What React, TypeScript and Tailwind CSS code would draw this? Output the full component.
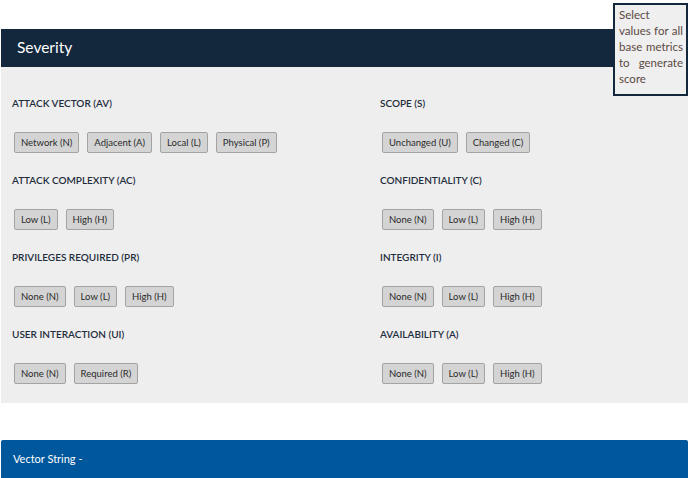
const metrics = [
  [
    { label: 'ATTACK VECTOR (AV)', options: ['Network (N)', 'Adjacent (A)', 'Local (L)', 'Physical (P)'] },
    { label: 'ATTACK COMPLEXITY (AC)', options: ['Low (L)', 'High (H)'] },
    { label: 'PRIVILEGES REQUIRED (PR)', options: ['None (N)', 'Low (L)', 'High (H)'] },
    { label: 'USER INTERACTION (UI)', options: ['None (N)', 'Required (R)'] },
  ],
  [
    { label: 'SCOPE (S)', options: ['Unchanged (U)', 'Changed (C)'] },
    { label: 'CONFIDENTIALITY (C)', options: ['None (N)', 'Low (L)', 'High (H)'] },
    { label: 'INTEGRITY (I)', options: ['None (N)', 'Low (L)', 'High (H)'] },
    { label: 'AVAILABILITY (A)', options: ['None (N)', 'Low (L)', 'High (H)'] },
  ],
]

function Metric({ label, options }: { label: string; options: string[] }) {
  return (
    <div className="mb-[21px] last:mb-0">
      <div className="text-[10px] leading-[12px] font-semibold text-[#1f2d3d]">{label}</div>
      <div className="mt-[23px] flex gap-[8px] pl-[2px]">
        {options.map((o) => (
          <button
            key={o}
            className="h-[21px] px-[6px] bg-[#d4d4d4] border border-[#a3a3a3] rounded-[2px] text-[9.5px] text-[#2a2a2a] leading-none"
          >
            {o}
          </button>
        ))}
      </div>
    </div>
  )
}

export default function App() {
  return (
    <div className="relative w-[689px] h-[478px] bg-white overflow-hidden" style={{ fontFamily: 'Lato, "Open Sans", sans-serif' }}>
      <div className="pt-[29px] pl-[1px] pr-[1px]">
        <div className="h-[38px] bg-[#13273d] flex items-center pl-[16px] text-white text-[15.5px]">Severity</div>
        <div className="bg-[#eeeeee] pt-[30px] pb-[19px] pl-[11px] grid grid-cols-[368px_1fr]">
          {metrics.map((col, i) => (
            <div key={i}>
              {col.map((m) => (
                <Metric key={m.label} {...m} />
              ))}
            </div>
          ))}
        </div>
        <div className="mt-[37px] h-[38px] bg-[#00579c] rounded-t-[2px] flex items-center pl-[12px] text-white text-[11px]">
          Vector String -
        </div>
      </div>
      <div className="absolute left-[613px] top-[3px] w-[75px] h-[93px] border-2 border-[#13273d] bg-[#efefef] pl-[4px] pr-[3px] pt-[2px] text-[11.5px] leading-[16px] text-[#5b4a44] text-justify">
        Select
        <br />
        values for all base metrics to generate score
      </div>
    </div>
  )
}
